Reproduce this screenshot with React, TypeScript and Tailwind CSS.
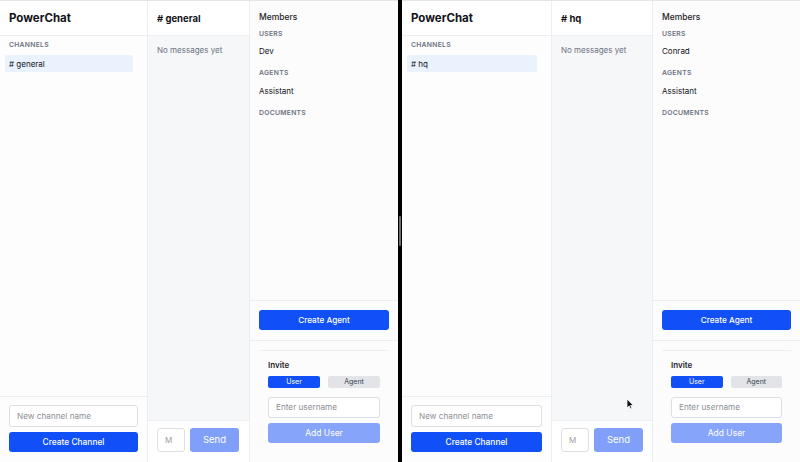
import React from 'react'

interface PaneProps {
  channel: string
  user: string
  sideW: string
  chatW: string
  showCursor?: boolean
}

function Label({ children, className = '' }: { children: React.ReactNode; className?: string }) {
  return (
    <div className={`text-[6.8px] leading-[8px] font-semibold tracking-[0.04em] text-[#6b7280] ${className}`}>
      {children}
    </div>
  )
}

function Pane({ channel, user, sideW, chatW, showCursor }: PaneProps) {
  return (
    <div className="relative flex h-full flex-1 min-w-0 border-t border-[#e3e5e8]">
      {/* sidebar */}
      <div className={`${sideW} flex flex-col border-r border-[#eceef1] bg-[#fdfdfe]`}>
        <div className="flex h-[35px] items-center border-b border-[#eceef1] bg-white px-[9px] pt-[2px]">
          <span className="text-[11.5px] font-bold text-[#111318]">PowerChat</span>
        </div>
        <Label className="mt-[5px] px-[9px]">CHANNELS</Label>
        <div className="mt-[6px] ml-[5px] mr-[14px] flex h-[17px] items-center rounded-[2px] bg-[#eaf2fd] px-[4px] text-[8px] text-[#111318]">
          # {channel}
        </div>
        <div className="flex-1" />
        <div className="flex flex-col gap-[5px] border-t border-[#eceef1] px-[9px] pt-[8px] pb-[10px]">
          <div className="flex h-[22px] items-center rounded-[3px] border border-[#dcdfe4] bg-white px-[7px] text-[8.2px] text-[#8b8f97]">
            New channel name
          </div>
          <div className="flex h-[20px] items-center justify-center rounded-[3px] bg-[#1150f7] text-[8.4px] font-medium text-white">
            Create Channel
          </div>
        </div>
      </div>

      {/* chat */}
      <div className={`${chatW} flex flex-col border-r border-[#eceef1]`}>
        <div className="flex h-[35px] items-center border-b border-[#eceef1] bg-white px-[9px] pt-[2px]">
          <span className="text-[9.5px] font-bold text-[#111318]"># {channel}</span>
        </div>
        <div className="flex-1 bg-[#f6f7f9] px-[9px] pt-[10px]">
          <div className="text-[8px] leading-[8px] text-[#6b7280]">No messages yet</div>
        </div>
        <div className="flex gap-[5px] border-t border-[#eceef1] bg-white px-[9px] pt-[7px] pb-[10px]">
          <div className="flex h-[24px] w-[28px] items-center overflow-hidden rounded-[3px] border border-[#dcdfe4] bg-white pl-[7px] text-[8px] text-[#9ca0a8]">
            M
          </div>
          <div className="flex h-[24px] w-[49px] items-center justify-center rounded-[3px] bg-[#809ff9] text-[9.5px] text-white">
            Send
          </div>
        </div>
      </div>

      {/* members */}
      <div className="flex flex-1 flex-col bg-[#fcfcfd]">
        <div className="flex-1 px-[9px] pt-[10px]">
          <div className="text-[8.5px] leading-[12px] font-medium text-[#1f2329]">Members</div>
          <Label className="mt-[7px]">USERS</Label>
          <div className="mt-[7px] text-[8px] leading-[12px] text-[#111318]">{user}</div>
          <Label className="mt-[12px]">AGENTS</Label>
          <div className="mt-[8px] text-[8px] leading-[12px] text-[#111318]">Assistant</div>
          <Label className="mt-[12px]">DOCUMENTS</Label>
        </div>
        <div className="border-t border-[#eceef1] px-[9px] pt-[9px] pb-[10px]">
          <div className="flex h-[20px] items-center justify-center rounded-[3px] bg-[#1150f7] text-[8.2px] font-medium text-white">
            Create Agent
          </div>
        </div>
        <div className="border-t border-[#eceef1] px-[9px] pt-[9px] pb-[19px]">
          <div className="border-t border-[#eceef1] px-[9px] pt-[8px]">
            <div className="text-[8px] leading-[12px] font-semibold text-[#1f2329]">Invite</div>
            <div className="mt-[5px] grid grid-cols-2 gap-[8px]">
              <div className="flex h-[12px] items-center justify-center rounded-[2px] bg-[#1150f7] text-[7px] text-white">
                User
              </div>
              <div className="flex h-[12px] items-center justify-center rounded-[2px] bg-[#e3e4e8] text-[7px] text-[#374151]">
                Agent
              </div>
            </div>
            <div className="mt-[9px] flex h-[21px] items-center rounded-[3px] border border-[#dcdfe4] bg-white px-[7px] text-[8.2px] text-[#8b8f97]">
              Enter username
            </div>
            <div className="mt-[5px] flex h-[20px] items-center justify-center rounded-[3px] bg-[#86a4f9] text-[8.5px] text-white">
              Add User
            </div>
          </div>
        </div>
      </div>

      {showCursor && (
        <svg className="absolute left-[224px] top-[397px]" width="8" height="12" viewBox="0 0 8 12">
          <path d="M1 1 L1 10 L3.2 8 L4.6 11 L6 10.4 L4.6 7.5 L7.4 7.5 Z" fill="#111" stroke="#fff" strokeWidth="0.8" />
        </svg>
      )}
    </div>
  )
}

export default function App() {
  return (
    <div className="flex h-[462px] w-[800px] overflow-hidden bg-white font-['Inter','Noto_Sans',sans-serif]">
      <Pane channel="general" user="Dev" sideW="w-[148px]" chatW="w-[102px]" />
      <div className="flex w-[4px] shrink-0 items-center justify-center bg-black">
        <div className="h-[30px] w-[2px] rounded-full bg-[#6d6d73]" />
      </div>
      <Pane channel="hq" user="Conrad" sideW="w-[150px]" chatW="w-[101px]" showCursor />
    </div>
  )
}
